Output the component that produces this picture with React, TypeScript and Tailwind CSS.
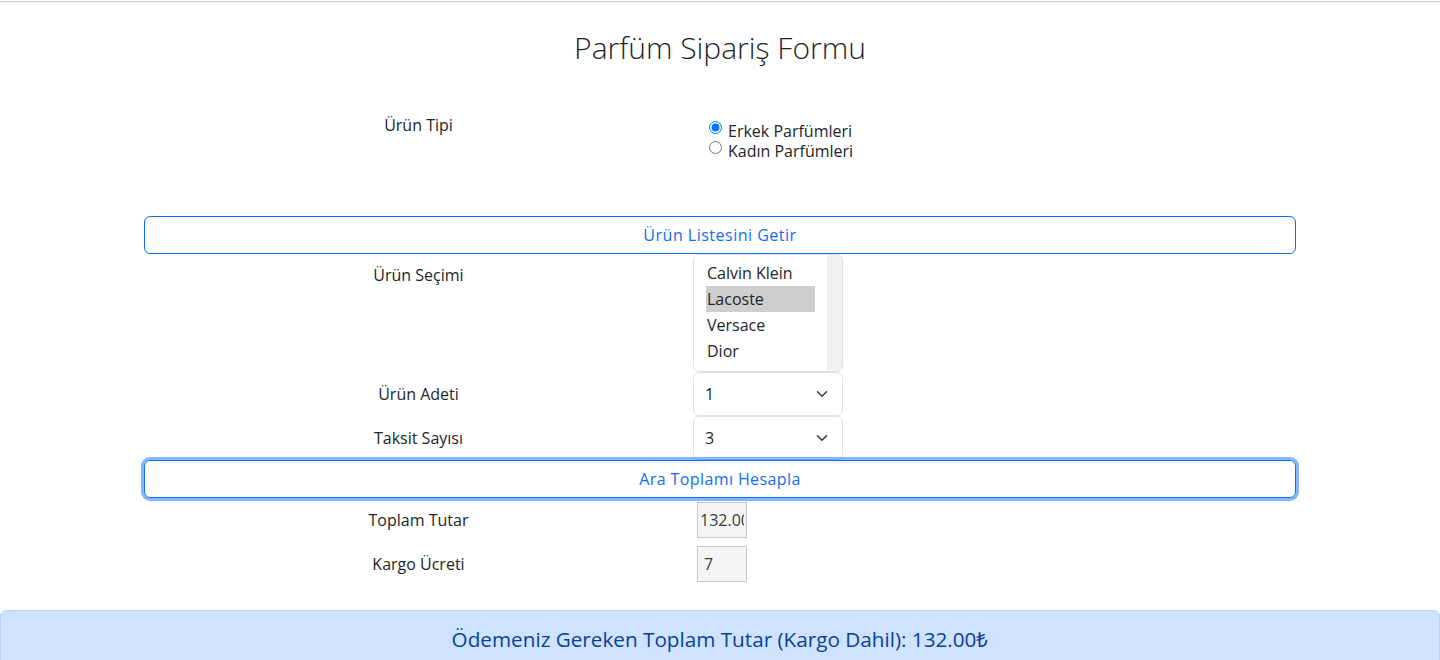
import { useState } from "react";

const urunler = ["Calvin Klein", "Lacoste", "Versace", "Dior"];

function Chevron() {
  return (
    <svg width="16" height="12" viewBox="0 0 16 16" fill="none">
      <path
        d="m2 5 6 6 6-6"
        stroke="#343a40"
        strokeWidth="2"
        strokeLinecap="round"
        strokeLinejoin="round"
      />
    </svg>
  );
}

function Satir({
  etiket,
  children,
  className = "",
  etiketClass = "",
}: {
  etiket: string;
  children: React.ReactNode;
  className?: string;
  etiketClass?: string;
}) {
  return (
    <div className={`flex ${className}`}>
      <div className={`w-[549px] text-center text-[16px] leading-6 ${etiketClass}`}>
        {etiket}
      </div>
      <div className="flex-1">{children}</div>
    </div>
  );
}

export default function App() {
  const [tip, setTip] = useState("erkek");
  const [secili, setSecili] = useState("Lacoste");

  return (
    <div className="min-h-screen bg-white font-['Open_Sans',sans-serif] text-[#212529]">
      <div className="mt-px h-px bg-[#cdcdcd]" />

      <div className="w-[1152px] mx-auto">
        <h3 className="pt-[29px] text-center text-[30px] font-light leading-[34px]">
          Parfüm Sipariş Formu
        </h3>

        {/* urun tipi */}
        <Satir etiket="Ürün Tipi" className="mt-[48px] h-[103px]">
          <div className="pt-2 pl-4 text-[16px] leading-5">
            <label className="flex items-start">
              <input
                type="radio"
                name="tip"
                checked={tip === "erkek"}
                onChange={() => setTip("erkek")}
                className="m-0 w-[13px] h-[13px]"
              />
              <span className="ml-1.5">Erkek Parfümleri</span>
            </label>
            <label className="flex items-start">
              <input
                type="radio"
                name="tip"
                checked={tip === "kadin"}
                onChange={() => setTip("kadin")}
                className="m-0 w-[13px] h-[13px]"
              />
              <span className="ml-1.5">Kadın Parfümleri</span>
            </label>
          </div>
        </Satir>

        <button className="w-full h-[38px] border border-[#0d6efd] rounded-md text-[#0d6efd] text-[16px] leading-6 tracking-[0.5px]">
          Ürün Listesini Getir
        </button>

        {/* urun secimi */}
        <Satir etiket="Ürün Seçimi" etiketClass="pt-[9px]">
          <div className="flex w-[150px] h-[118px] border border-[#dee2e6] rounded-md overflow-hidden">
            <div className="flex-1 pl-3 pr-3 pt-[5px] text-[16px]">
              {urunler.map((u) => (
                <div
                  key={u}
                  onClick={() => setSecili(u)}
                  className={`h-[26px] leading-[26px] pl-px ${
                    secili === u ? "bg-[#cecece]" : ""
                  }`}
                >
                  {u}
                </div>
              ))}
            </div>
            <div className="w-[15px] bg-[#f1f1f1] border-l border-[#ececec]" />
          </div>
        </Satir>

        <Satir etiket="Ürün Adeti" className="h-[44px] items-center">
          <div className="flex items-center justify-between w-[150px] h-[44px] border border-[#dee2e6] rounded-md pl-[11px] pr-3 text-[16px]">
            <span>1</span>
            <Chevron />
          </div>
        </Satir>

        <Satir etiket="Taksit Sayısı" className="h-[44px] items-center">
          <div className="flex items-center justify-between w-[150px] h-[44px] border border-[#dee2e6] rounded-md pl-[11px] pr-3 text-[16px]">
            <span>3</span>
            <Chevron />
          </div>
        </Satir>

        <button className="w-full h-[38px] border border-[#0d6efd] rounded-md text-[#0d6efd] text-[16px] leading-6 tracking-[0.4px] shadow-[0_0_0_3px_rgba(13,110,253,0.5)]">
          Ara Toplamı Hesapla
        </button>

        <Satir etiket="Toplam Tutar" className="h-[44px] items-center">
          <input
            readOnly
            value="132.00"
            className="ml-1 w-[50px] h-[36px] px-[2px] bg-[#f5f5f5] border border-[#c9c9c9] text-[16px] text-[#3b3b3b] outline-none"
          />
        </Satir>

        <Satir etiket="Kargo Ücreti" className="h-[44px] items-center">
          <input
            readOnly
            value="7"
            className="ml-1 w-[50px] h-[36px] px-[6px] bg-[#f5f5f5] border border-[#c9c9c9] text-[16px] text-[#3b3b3b] outline-none"
          />
        </Satir>
      </div>

      <div className="mt-[24px] border border-[#b6d4fe] rounded-t-md bg-[#cfe2ff] pt-4 pb-4 text-center text-[20.7px] leading-6 text-[#084298]">
        Ödemeniz Gereken Toplam Tutar (Kargo Dahil): 132.00₺
      </div>
    </div>
  );
}
